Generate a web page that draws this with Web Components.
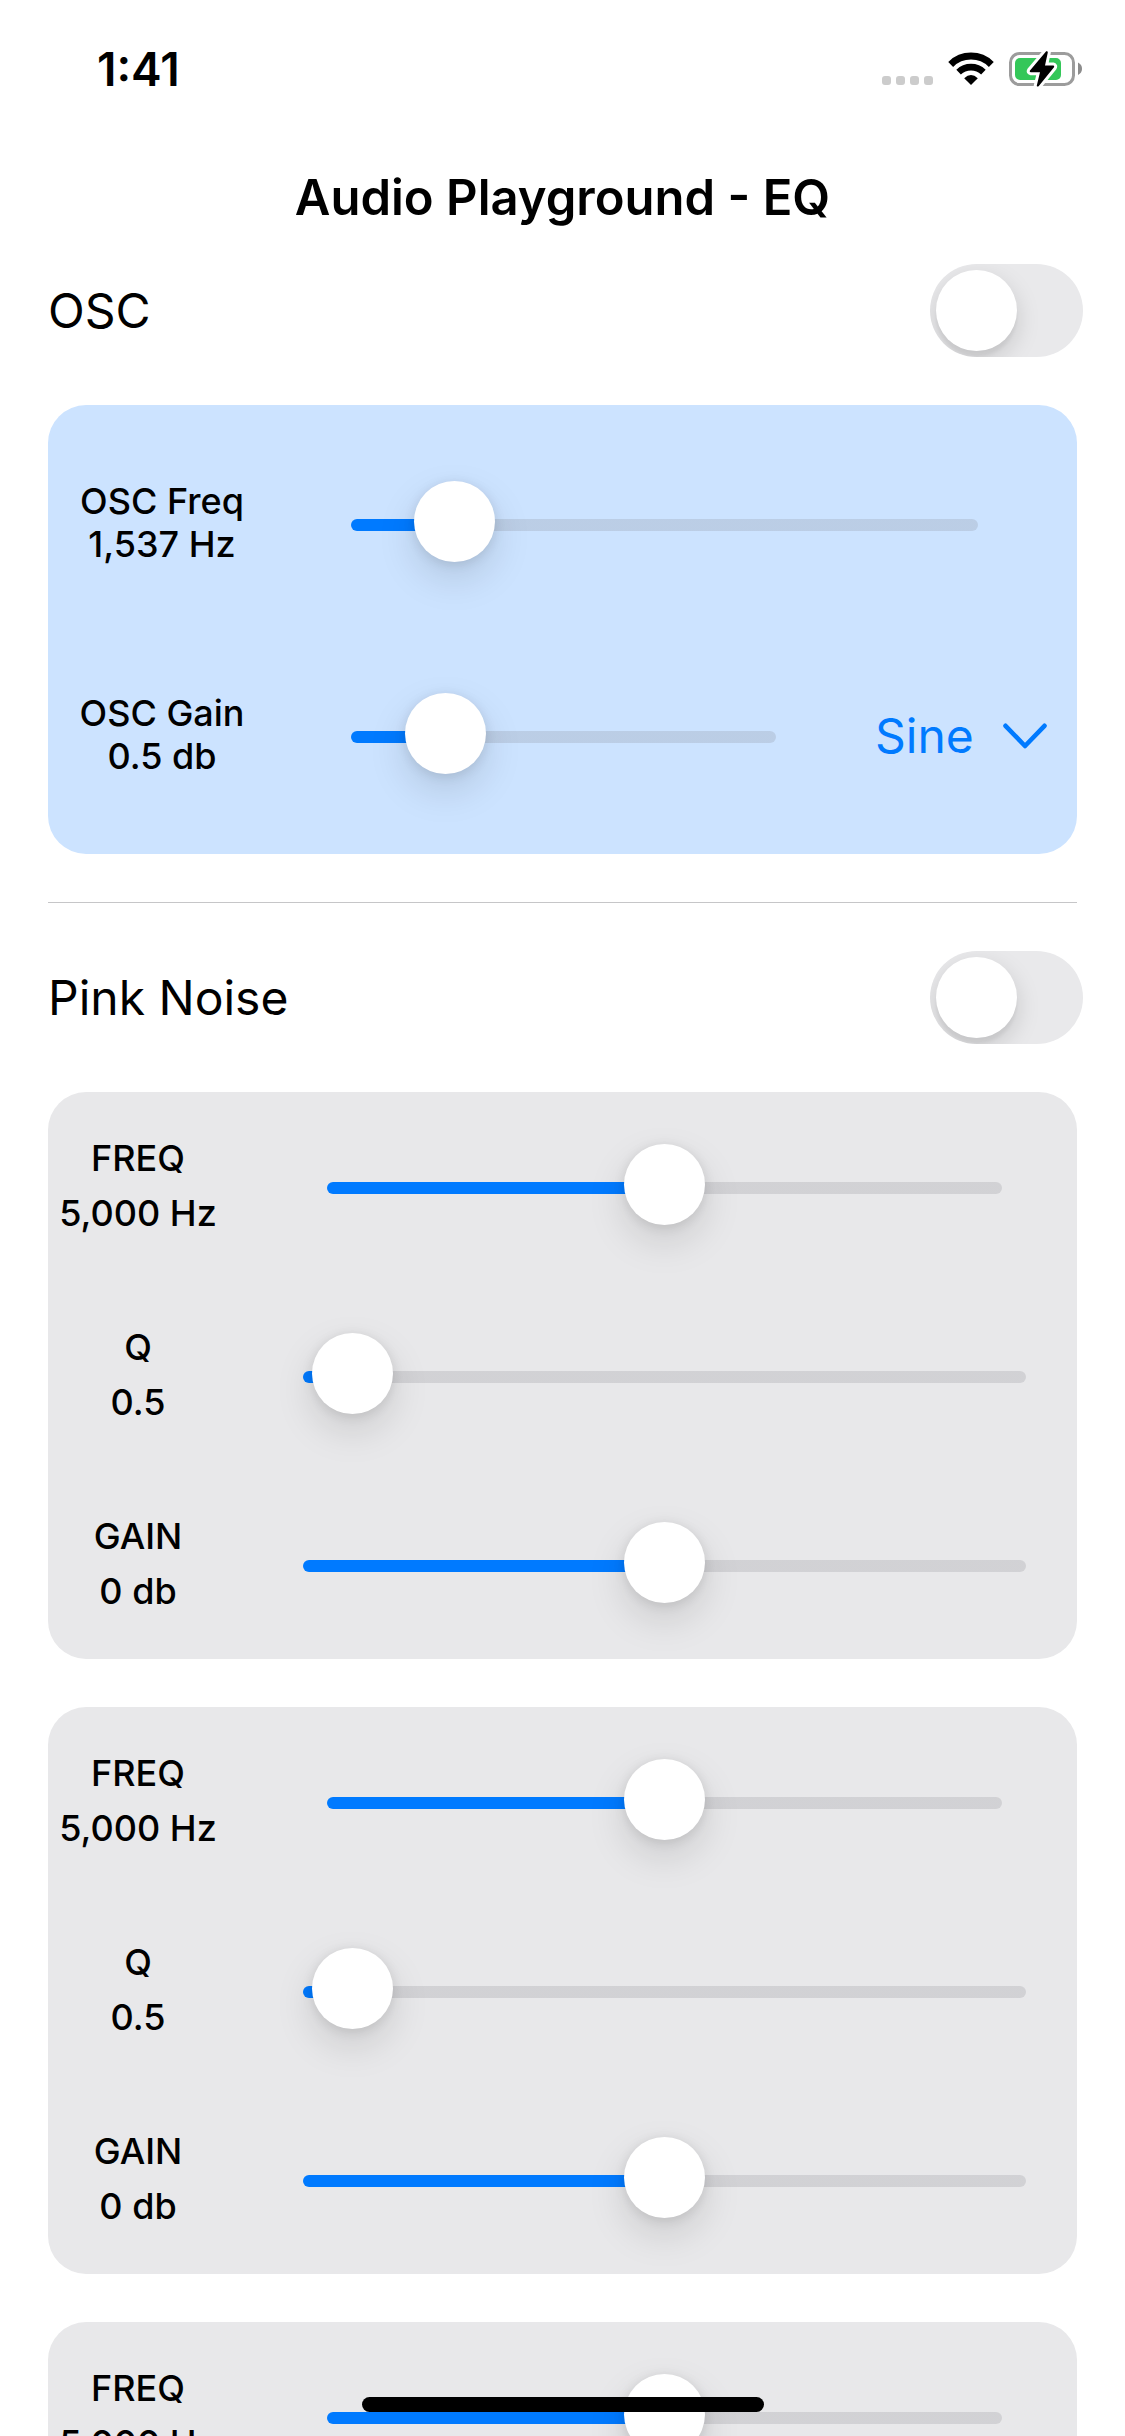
<!DOCTYPE html>
<html lang="en">
<head>
<meta charset="utf-8">
<meta name="viewport" content="width=device-width, initial-scale=1">
<title>Audio Playground - EQ</title>
<style>
    body {
        margin: 0;
        background: #fff;
        color: #000;
        font-family: Inter, "Liberation Sans", sans-serif;
    }
</style>
</head>
<body>
<eq-app>
    <status-bar slot="status" time="1:41"></status-bar>
    <span slot="title">Audio Playground - EQ</span>

    <switch-row>OSC</switch-row>
    <control-card variant="osc">
        <param-slider variant="osc-freq" name="OSC Freq" value="1,537 Hz" position="116"></param-slider>
        <param-slider variant="osc" name="OSC Gain" value="0.5 db" position="157">
            <wave-picker></wave-picker>
        </param-slider>
    </control-card>
    <hr>
    <switch-row>Pink Noise</switch-row>
    <eq-band></eq-band>
    <eq-band></eq-band>
    <eq-band></eq-band>
</eq-app>

<script>
class EqApp extends HTMLElement {
    constructor() {
        super();
        this.attachShadow({ mode: 'open' });
    }

    connectedCallback() {
        this.shadowRoot.innerHTML = `
            <style>
                :host {
                    display: flex;
                    flex-direction: column;
                    height: 100vh;
                    overflow: hidden;
                }
                header {
                    display: flex;
                    flex: none;
                    align-items: center;
                    justify-content: center;
                    height: 132px;
                }
                h1 {
                    margin: 0;
                    font-size: 49px;
                    font-weight: 600;
                    line-height: 60px;
                }
                main {
                    display: flex;
                    flex: 1;
                    flex-direction: column;
                    gap: 48px;
                    min-height: 0;
                    padding: 0 48px;
                    overflow-y: auto;
                    scrollbar-width: none;
                }
                ::slotted(hr) {
                    flex: none;
                    width: 100%;
                    height: 1px;
                    margin: 0;
                    border: 0;
                    background: #c6c6c8;
                }
                .home {
                    position: fixed;
                    bottom: 24px;
                    left: 50%;
                    width: 402px;
                    height: 15px;
                    margin-left: -201px;
                    border-radius: 8px;
                    background: #000;
                }
            </style>
            <slot name="status"></slot>
            <header><h1><slot name="title"></slot></h1></header>
            <main><slot></slot></main>
            <div class="home"></div>
        `;
    }
}

class StatusBar extends HTMLElement {
    constructor() {
        super();
        this.attachShadow({ mode: 'open' });
    }

    connectedCallback() {
        this.shadowRoot.innerHTML = `
            <style>
                :host {
                    display: flex;
                    flex: none;
                    align-items: center;
                    justify-content: space-between;
                    box-sizing: border-box;
                    height: 132px;
                    padding: 6px 43px 0 97px;
                }
                time {
                    font-size: 46px;
                    font-weight: 600;
                    line-height: 54px;
                }
                svg {
                    display: block;
                }
            </style>
            <time>${this.getAttribute('time')}</time>
            <svg width="200" height="36" viewBox="0 0 200 36" aria-hidden="true">
                <g fill="#ccc">
                    <rect x="0" y="25" width="9" height="9" rx="3"/>
                    <rect x="14" y="25" width="9" height="9" rx="3"/>
                    <rect x="28" y="25" width="9" height="9" rx="3"/>
                    <rect x="42" y="25" width="9" height="9" rx="3"/>
                </g>
                <g fill="none" stroke="#000">
                    <path stroke-width="7" d="M68.7 13.4A29 29 0 0 1 109.3 13.4"/>
                    <path stroke-width="6.6" d="M76.6 21.1A18 18 0 0 1 101.4 21.1"/>
                </g>
                <path d="M89 34L82.2 27.2Q89 20.8 95.8 27.2Z"/>
                <rect x="128.5" y="2.5" width="63" height="31" rx="9" fill="none" stroke="#9c9c9c" stroke-width="3"/>
                <path fill="#8c8c8c" d="M196 11.5Q200 13.5 200 17.7T196 24Z"/>
                <rect x="133" y="7" width="46" height="22" rx="5" fill="#34c759"/>
                <path fill="#000" stroke="#fff" stroke-width="6" stroke-linejoin="round" paint-order="stroke"
                    d="M164.2 0.3Q165.8-.3 165.8 1.4L163 14.5H171.2Q172.8 14.8 171.8 16.5L156.6 35.2Q154.5 36.3 154.8 34.4L158 21.2H148.6Q147.2 20.8 148 19.4Z"/>
            </svg>
        `;
    }
}

class SwitchRow extends HTMLElement {
    constructor() {
        super();
        this.attachShadow({ mode: 'open' });
    }

    connectedCallback() {
        this.shadowRoot.innerHTML = `
            <style>
                :host {
                    display: block;
                    flex: none;
                    margin-right: -6px;
                }
                label {
                    display: flex;
                    align-items: center;
                    justify-content: space-between;
                    height: 93px;
                    font-size: 48px;
                    line-height: 60px;
                }
                input {
                    appearance: none;
                    width: 153px;
                    height: 93px;
                    margin: 0;
                    padding: 6px;
                    border-radius: 47px;
                    background: #e9e9eb;
                    overflow: hidden;
                }
                input::before {
                    content: "";
                    display: block;
                    width: 81px;
                    height: 81px;
                    border-radius: 50%;
                    background: #fff;
                    box-shadow: 0 9px 24px rgba(0, 0, 0, .15), 0 6px 3px rgba(0, 0, 0, .04);
                }
                input:checked {
                    background: #34c759;
                }
                input:checked::before {
                    margin-left: 60px;
                }
            </style>
            <label><slot></slot><input type="checkbox" role="switch"></label>
        `;
    }
}

class ControlCard extends HTMLElement {
    constructor() {
        super();
        this.attachShadow({ mode: 'open' });
    }

    connectedCallback() {
        this.shadowRoot.innerHTML = `
            <style>
                :host {
                    display: flex;
                    flex: none;
                    flex-direction: column;
                    justify-content: center;
                    border-radius: 38px;
                    background: #e8e8ea;
                }
                :host([variant="osc"]) {
                    box-sizing: border-box;
                    min-height: 449px;
                    padding: 0 24px;
                    background: #cce3ff;
                }
            </style>
            <slot></slot>
        `;
    }
}

class ParamSlider extends HTMLElement {
    constructor() {
        super();
        this.attachShadow({ mode: 'open' });
    }

    connectedCallback() {
        const name = this.getAttribute('name');
        const value = this.getAttribute('value');
        const position = this.getAttribute('position') || '0';

        this.shadowRoot.innerHTML = `
            <style>
                :host {
                    display: flex;
                    align-items: center;
                    height: 189px;
                    padding-right: 51px;
                    --gap: 12px;
                    --before: 75px;
                    --after: 0px;
                }
                :host([variant="freq"]) {
                    --before: 99px;
                    --after: 24px;
                }
                :host([variant^="osc"]) {
                    height: 212px;
                    padding-right: 0;
                    --gap: 0px;
                    --before: 99px;
                    --after: 99px;
                }
                :host([variant="osc-freq"]) {
                    --after: 75px;
                }
                label {
                    display: flex;
                    flex: none;
                    flex-direction: column;
                    align-items: center;
                    gap: var(--gap);
                    width: 180px;
                    padding-bottom: 2px;
                    font-size: 36px;
                    font-weight: 500;
                    line-height: 43px;
                    white-space: nowrap;
                }
                input {
                    appearance: none;
                    flex: 1;
                    min-width: 0;
                    height: 81px;
                    margin: 2px var(--after) 0 var(--before);
                    background: none;
                    --stop: calc(40px + (100% - 81px) * var(--position) / 1000);
                }
                input::-webkit-slider-runnable-track {
                    height: 12px;
                    border-radius: 6px;
                    background: linear-gradient(to right, #007aff var(--stop), rgba(120, 120, 128, .2) var(--stop));
                }
                input::-webkit-slider-thumb {
                    appearance: none;
                    width: 81px;
                    height: 81px;
                    margin-top: -38px;
                    border-radius: 50%;
                    background: #fff;
                    box-shadow: 0 16px 39px rgba(0, 0, 0, .13), 0 2px 12px rgba(0, 0, 0, .1);
                }
            </style>
            <label for="range"><span>${name}</span><span id="value">${value}</span></label>
            <input id="range" type="range" min="0" max="1000" value="${position}" aria-valuetext="${value}">
            <slot></slot>
        `;

        this._range = this.shadowRoot.getElementById('range');
        this._range.addEventListener('input', () => this._updateFill());
        this._updateFill();
    }

    _updateFill() {
        this._range.style.setProperty('--position', this._range.value);
    }
}

class WavePicker extends HTMLElement {
    constructor() {
        super();
        this.attachShadow({ mode: 'open' });
    }

    connectedCallback() {
        this.shadowRoot.innerHTML = `
            <style>
                :host {
                    display: flex;
                    flex: none;
                    align-items: center;
                    justify-content: space-between;
                    box-sizing: border-box;
                    width: 178px;
                    padding-right: 6px;
                    color: #007aff;
                }
                select {
                    appearance: none;
                    field-sizing: content;
                    margin: 0;
                    padding: 0;
                    border: 0;
                    background: none;
                    color: inherit;
                    font: 400 48px/60px Inter, "Liberation Sans", sans-serif;
                }
                svg {
                    flex: none;
                }
            </style>
            <select aria-label="Waveform">
                <option>Sine</option>
                <option>Square</option>
                <option>Triangle</option>
            </select>
            <svg width="44" height="26" viewBox="0 0 44 26" aria-hidden="true">
                <path d="M2.5 2.8L22 23L41.5 2.8" fill="none" stroke="currentColor" stroke-width="4.6" stroke-linecap="round" stroke-linejoin="round"/>
            </svg>
        `;
    }
}

class EqBand extends HTMLElement {
    constructor() {
        super();
        this.attachShadow({ mode: 'open' });
    }

    connectedCallback() {
        this.shadowRoot.innerHTML = `
            <style>
                :host {
                    display: block;
                    flex: none;
                }
            </style>
            <control-card>
                <param-slider variant="freq" name="FREQ" value="5,000 Hz" position="500"></param-slider>
                <param-slider name="Q" value="0.5" position="14"></param-slider>
                <param-slider name="GAIN" value="0 db" position="500"></param-slider>
            </control-card>
        `;
    }
}

customElements.define('status-bar', StatusBar);
customElements.define('switch-row', SwitchRow);
customElements.define('control-card', ControlCard);
customElements.define('wave-picker', WavePicker);
customElements.define('param-slider', ParamSlider);
customElements.define('eq-band', EqBand);
customElements.define('eq-app', EqApp);
</script>
</body>
</html>
